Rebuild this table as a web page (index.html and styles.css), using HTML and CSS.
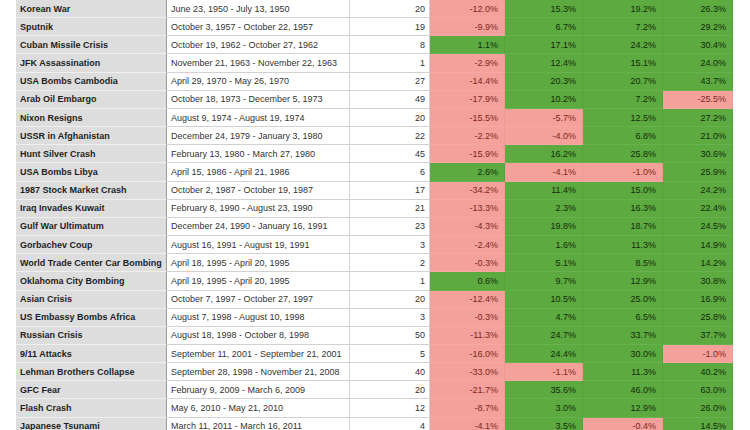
FILE: index.html
```html
<!DOCTYPE html>
<html>
<head>
<meta charset="utf-8">
<link rel="stylesheet" href="styles.css">
</head>
<body>
<table class="events">
<colgroup>
<col class="c-name"><col class="c-date"><col class="c-days"><col class="c-p"><col class="c-q"><col class="c-r"><col class="c-s">
</colgroup>
<tbody>
<tr><td class="name">Korean War</td><td class="date">June 23, 1950 - July 13, 1950</td><td class="num">20</td><td class="neg">-12.0%</td><td class="pos">15.3%</td><td class="pos">19.2%</td><td class="pos">26.3%</td></tr>
<tr><td class="name">Sputnik</td><td class="date">October 3, 1957 - October 22, 1957</td><td class="num">19</td><td class="neg">-9.9%</td><td class="pos">6.7%</td><td class="pos">7.2%</td><td class="pos">29.2%</td></tr>
<tr><td class="name">Cuban Missile Crisis</td><td class="date">October 19, 1962 - October 27, 1962</td><td class="num">8</td><td class="pos">1.1%</td><td class="pos">17.1%</td><td class="pos">24.2%</td><td class="pos">30.4%</td></tr>
<tr><td class="name">JFK Assassination</td><td class="date">November 21, 1963 - November 22, 1963</td><td class="num">1</td><td class="neg">-2.9%</td><td class="pos">12.4%</td><td class="pos">15.1%</td><td class="pos">24.0%</td></tr>
<tr><td class="name">USA Bombs Cambodia</td><td class="date">April 29, 1970 - May 26, 1970</td><td class="num">27</td><td class="neg">-14.4%</td><td class="pos">20.3%</td><td class="pos">20.7%</td><td class="pos">43.7%</td></tr>
<tr><td class="name">Arab Oil Embargo</td><td class="date">October 18, 1973 - December 5, 1973</td><td class="num">49</td><td class="neg">-17.9%</td><td class="pos">10.2%</td><td class="pos">7.2%</td><td class="neg">-25.5%</td></tr>
<tr><td class="name">Nixon Resigns</td><td class="date">August 9, 1974 - August 19, 1974</td><td class="num">20</td><td class="neg">-15.5%</td><td class="neg">-5.7%</td><td class="pos">12.5%</td><td class="pos">27.2%</td></tr>
<tr><td class="name">USSR in Afghanistan</td><td class="date">December 24, 1979 - January 3, 1980</td><td class="num">22</td><td class="neg">-2.2%</td><td class="neg">-4.0%</td><td class="pos">6.8%</td><td class="pos">21.0%</td></tr>
<tr><td class="name">Hunt Silver Crash</td><td class="date">February 13, 1980 - March 27, 1980</td><td class="num">45</td><td class="neg">-15.9%</td><td class="pos">16.2%</td><td class="pos">25.8%</td><td class="pos">30.6%</td></tr>
<tr><td class="name">USA Bombs Libya</td><td class="date">April 15, 1986 - April 21, 1986</td><td class="num">6</td><td class="pos">2.6%</td><td class="neg">-4.1%</td><td class="neg">-1.0%</td><td class="pos">25.9%</td></tr>
<tr><td class="name">1987 Stock Market Crash</td><td class="date">October 2, 1987 - October 19, 1987</td><td class="num">17</td><td class="neg">-34.2%</td><td class="pos">11.4%</td><td class="pos">15.0%</td><td class="pos">24.2%</td></tr>
<tr><td class="name">Iraq Invades Kuwait</td><td class="date">February 8, 1990 - August 23, 1990</td><td class="num">21</td><td class="neg">-13.3%</td><td class="pos">2.3%</td><td class="pos">16.3%</td><td class="pos">22.4%</td></tr>
<tr><td class="name">Gulf War Ultimatum</td><td class="date">December 24, 1990 - January 16, 1991</td><td class="num">23</td><td class="neg">-4.3%</td><td class="pos">19.8%</td><td class="pos">18.7%</td><td class="pos">24.5%</td></tr>
<tr><td class="name">Gorbachev Coup</td><td class="date">August 16, 1991 - August 19, 1991</td><td class="num">3</td><td class="neg">-2.4%</td><td class="pos">1.6%</td><td class="pos">11.3%</td><td class="pos">14.9%</td></tr>
<tr><td class="name">World Trade Center Car Bombing</td><td class="date">April 18, 1995 - April 20, 1995</td><td class="num">2</td><td class="neg">-0.3%</td><td class="pos">5.1%</td><td class="pos">8.5%</td><td class="pos">14.2%</td></tr>
<tr><td class="name">Oklahoma City Bombing</td><td class="date">April 19, 1995 - April 20, 1995</td><td class="num">1</td><td class="pos">0.6%</td><td class="pos">9.7%</td><td class="pos">12.9%</td><td class="pos">30.8%</td></tr>
<tr><td class="name">Asian Crisis</td><td class="date">October 7, 1997 - October 27, 1997</td><td class="num">20</td><td class="neg">-12.4%</td><td class="pos">10.5%</td><td class="pos">25.0%</td><td class="pos">16.9%</td></tr>
<tr><td class="name">US Embassy Bombs Africa</td><td class="date">August 7, 1998 - August 10, 1998</td><td class="num">3</td><td class="neg">-0.3%</td><td class="pos">4.7%</td><td class="pos">6.5%</td><td class="pos">25.8%</td></tr>
<tr><td class="name">Russian Crisis</td><td class="date">August 18, 1998 - October 8, 1998</td><td class="num">50</td><td class="neg">-11.3%</td><td class="pos">24.7%</td><td class="pos">33.7%</td><td class="pos">37.7%</td></tr>
<tr><td class="name">9/11 Attacks</td><td class="date">September 11, 2001 - September 21, 2001</td><td class="num">5</td><td class="neg">-16.0%</td><td class="pos">24.4%</td><td class="pos">30.0%</td><td class="neg">-1.0%</td></tr>
<tr><td class="name">Lehman Brothers Collapse</td><td class="date">September 28, 1998 - November 21, 2008</td><td class="num">40</td><td class="neg">-33.0%</td><td class="neg">-1.1%</td><td class="pos">11.3%</td><td class="pos">40.2%</td></tr>
<tr><td class="name">GFC Fear</td><td class="date">February 9, 2009 - March 6, 2009</td><td class="num">20</td><td class="neg">-21.7%</td><td class="pos">35.6%</td><td class="pos">46.0%</td><td class="pos">63.0%</td></tr>
<tr><td class="name">Flash Crash</td><td class="date">May 6, 2010 - May 21, 2010</td><td class="num">12</td><td class="neg">-8.7%</td><td class="pos">3.0%</td><td class="pos">12.9%</td><td class="pos">26.0%</td></tr>
<tr><td class="name">Japanese Tsunami</td><td class="date">March 11, 2011 - March 16, 2011</td><td class="num">4</td><td class="neg">-4.1%</td><td class="pos">3.5%</td><td class="neg">-0.4%</td><td class="pos">14.5%</td></tr>
</tbody>
</table>
</body>
</html>
```

FILE: styles.css
```css
html, body {
  margin: 0;
  padding: 0;
  background: #ffffff;
  overflow: hidden;
}
body {
  width: 750px;
  height: 430px;
  padding-left: 16px;
  box-sizing: border-box;
  font-family: "Liberation Sans", Arial, sans-serif;
  font-size: 9px;
}
.events {
  border-collapse: separate;
  border-spacing: 0;
  table-layout: fixed;
  width: 717px;
  margin-top: 0;
}
.c-name { width: 151px; }
.c-date { width: 183px; }
.c-days { width: 80px; }
.c-p { width: 75px; }
.c-q { width: 78px; }
.c-r { width: 80px; }
.c-s { width: 70px; }
.events tr { height: 18.17px; }
.events td {
  padding: 0 4px;
  height: 18.17px;
  box-sizing: border-box;
  border-bottom: 1px solid #d2d2d2;
  border-right: 1px solid #d2d2d2;
  white-space: nowrap;
  overflow: hidden;
  line-height: 10px;
  color: #2e2e2e;
}
.events td.name {
  background: #dddddd;
  font-weight: bold;
  color: #1e1e1e;
  border-bottom-color: #efefef;
  border-right-color: #9a9a9a;
}
.events td.date {
  background: #ffffff;
  color: #333333;
}
.events td.num {
  text-align: right;
  color: #333333;
}
.events td.pos,
.events td.neg {
  text-align: right;
  padding-right: 6px;
}
.events td.pos {
  background: #5caa40;
  color: #142b0b;
  border-bottom-color: #68b24d;
  border-right-color: #54a039;
}
.events td.neg {
  background: #f5a19b;
  color: #7a2822;
  border-bottom-color: #f3aaa4;
  border-right-color: #ef9a94;
}
```
